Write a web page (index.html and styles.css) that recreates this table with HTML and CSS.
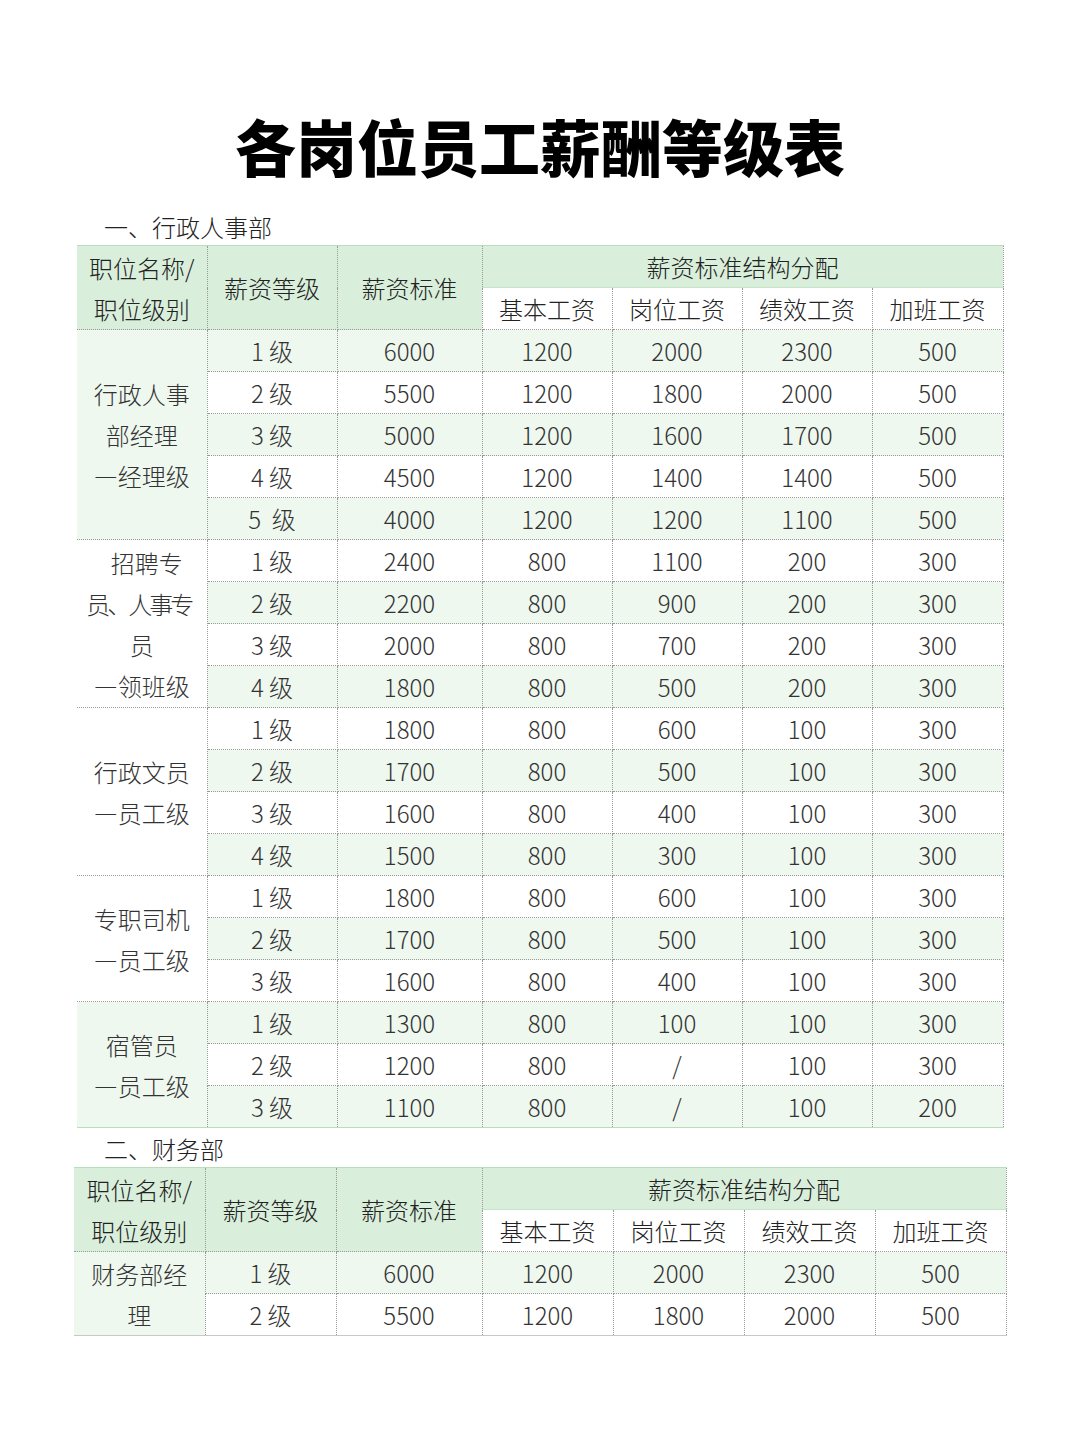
FILE: index.html
```html
<!DOCTYPE html>
<html lang="zh-CN">
<head>
<meta charset="utf-8">
<title>各岗位员工薪酬等级表</title>
<link rel="stylesheet" href="styles.css">
</head>
<body>
<div class="page">
  <h1 class="title">各岗位员工薪酬等级表</h1>

  <section class="sec sec-1">
    <div class="label">一、行政人事部</div>
    <table class="grid t1">
      <colgroup>
        <col style="width:130px"><col style="width:130px"><col style="width:145px">
        <col style="width:130px"><col style="width:130px"><col style="width:130px"><col style="width:131px">
      </colgroup>
      <thead>
        <tr class="h1">
          <th rowspan="2" class="hg">职位名称/<br>职位级别</th>
          <th rowspan="2" class="hg">薪资等级</th>
          <th rowspan="2" class="hg">薪资标准</th>
          <th colspan="4" class="hg span">薪资标准结构分配</th>
        </tr>
        <tr class="h2">
          <th>基本工资</th><th>岗位工资</th><th>绩效工资</th><th>加班工资</th>
        </tr>
      </thead>
      <tbody>
        <tr class="g"><td rowspan="5" class="name g">行政人事<br>部经理<br>—经理级</td><td>1 级</td><td>6000</td><td>1200</td><td>2000</td><td>2300</td><td>500</td></tr>
        <tr><td>2 级</td><td>5500</td><td>1200</td><td>1800</td><td>2000</td><td>500</td></tr>
        <tr class="g"><td>3 级</td><td>5000</td><td>1200</td><td>1600</td><td>1700</td><td>500</td></tr>
        <tr><td>4 级</td><td>4500</td><td>1200</td><td>1400</td><td>1400</td><td>500</td></tr>
        <tr class="g"><td>5&nbsp; 级</td><td>4000</td><td>1200</td><td>1200</td><td>1100</td><td>500</td></tr>

        <tr><td rowspan="4" class="name w"><span class="shift">招聘专</span><br><span class="tight">员、人事专</span><br>员<br>—领班级</td><td>1 级</td><td>2400</td><td>800</td><td>1100</td><td>200</td><td>300</td></tr>
        <tr class="g"><td>2 级</td><td>2200</td><td>800</td><td>900</td><td>200</td><td>300</td></tr>
        <tr><td>3 级</td><td>2000</td><td>800</td><td>700</td><td>200</td><td>300</td></tr>
        <tr class="g"><td>4 级</td><td>1800</td><td>800</td><td>500</td><td>200</td><td>300</td></tr>

        <tr><td rowspan="4" class="name w">行政文员<br>—员工级</td><td>1 级</td><td>1800</td><td>800</td><td>600</td><td>100</td><td>300</td></tr>
        <tr class="g"><td>2 级</td><td>1700</td><td>800</td><td>500</td><td>100</td><td>300</td></tr>
        <tr><td>3 级</td><td>1600</td><td>800</td><td>400</td><td>100</td><td>300</td></tr>
        <tr class="g"><td>4 级</td><td>1500</td><td>800</td><td>300</td><td>100</td><td>300</td></tr>

        <tr><td rowspan="3" class="name w">专职司机<br>—员工级</td><td>1 级</td><td>1800</td><td>800</td><td>600</td><td>100</td><td>300</td></tr>
        <tr class="g"><td>2 级</td><td>1700</td><td>800</td><td>500</td><td>100</td><td>300</td></tr>
        <tr><td>3 级</td><td>1600</td><td>800</td><td>400</td><td>100</td><td>300</td></tr>

        <tr class="g"><td rowspan="3" class="name g">宿管员<br>—员工级</td><td>1 级</td><td>1300</td><td>800</td><td>100</td><td>100</td><td>300</td></tr>
        <tr><td>2 级</td><td>1200</td><td>800</td><td>/</td><td>100</td><td>300</td></tr>
        <tr class="g last"><td>3 级</td><td>1100</td><td>800</td><td>/</td><td>100</td><td>200</td></tr>
      </tbody>
    </table>
  </section>

  <section class="sec sec-2">
    <div class="label">二、财务部</div>
    <table class="grid t2">
      <colgroup>
        <col style="width:131px"><col style="width:131px"><col style="width:146px">
        <col style="width:131px"><col style="width:131px"><col style="width:131px"><col style="width:131px">
      </colgroup>
      <thead>
        <tr class="h1">
          <th rowspan="2" class="hg">职位名称/<br>职位级别</th>
          <th rowspan="2" class="hg">薪资等级</th>
          <th rowspan="2" class="hg">薪资标准</th>
          <th colspan="4" class="hg span">薪资标准结构分配</th>
        </tr>
        <tr class="h2">
          <th>基本工资</th><th>岗位工资</th><th>绩效工资</th><th>加班工资</th>
        </tr>
      </thead>
      <tbody>
        <tr class="g"><td rowspan="2" class="name g">财务部经<br>理</td><td>1 级</td><td>6000</td><td>1200</td><td>2000</td><td>2300</td><td>500</td></tr>
        <tr class="lastgray"><td>2 级</td><td>5500</td><td>1200</td><td>1800</td><td>2000</td><td>500</td></tr>
      </tbody>
    </table>
  </section>
</div>
</body>
</html>
```

FILE: styles.css
```css
html, body {
  margin: 0;
  padding: 0;
  background: #ffffff;
}

body {
  font-family: "Noto Sans CJK SC", "Noto Sans", sans-serif;
  color: #333333;
}

.page {
  width: 1080px;
  padding-top: 110px;
  display: flex;
  flex-direction: column;
  align-items: center;
}

.title {
  margin: 0;
  height: 80px;
  line-height: 72px;
  font-size: 61px;
  font-weight: 900;
  color: #000000;
  letter-spacing: 0;
  text-align: center;
}

.sec {
  display: flex;
  flex-direction: column;
}

.sec-1 {
  width: 926px;
  margin-top: 21px;
}

.sec-2 {
  width: 932px;
  margin-top: 5px;
}

.label {
  height: 34px;
  line-height: 32px;
  font-size: 24px;
  font-weight: 300;
  padding-left: 27px;
  color: #222222;
}

.sec-2 .label {
  padding-left: 30px;
}

.grid {
  border-collapse: collapse;
  table-layout: fixed;
  width: 100%;
  font-size: 24px;
  font-weight: 300;
}

.grid th,
.grid td {
  height: 41px;
  padding: 0;
  text-align: center;
  vertical-align: middle;
  border: 1px dotted #9a9a9a;
  font-weight: 300;
  white-space: nowrap;
  line-height: 41px;
  color: #333333;
}

.grid tr > :first-child {
  border-left: none;
}

.grid thead tr.h1 th {
  border-top: 1px solid #b7dfba;
}

.grid th.hg {
  background: #d9efdb;
  color: #222222;
}

.grid th.span {
  border-bottom: 1px solid #c4e5c6;
}

.grid tr.h2 th {
  background: #ffffff;
  color: #222222;
}

.grid tbody tr.g td {
  background: #eef8ef;
}

.grid tbody td.name {
  line-height: 41px;
}

.grid tbody td.name.g {
  background: #eef8ef;
}

.grid tbody td.name.w {
  background: #ffffff;
}

.shift {
  margin-left: 10px;
}

.tight {
  letter-spacing: -3px;
  margin-left: -6px;
}

.t1 tbody tr.last td {
  border-bottom: 1px solid #b7dfba;
}

.t1 tbody tr:nth-last-child(3) td.name {
  border-bottom: 1px solid #b7dfba;
}

.t2 tbody tr.lastgray td,
.t2 tbody td.name {
  border-bottom: 1px solid #c8c8c8;
}
```
